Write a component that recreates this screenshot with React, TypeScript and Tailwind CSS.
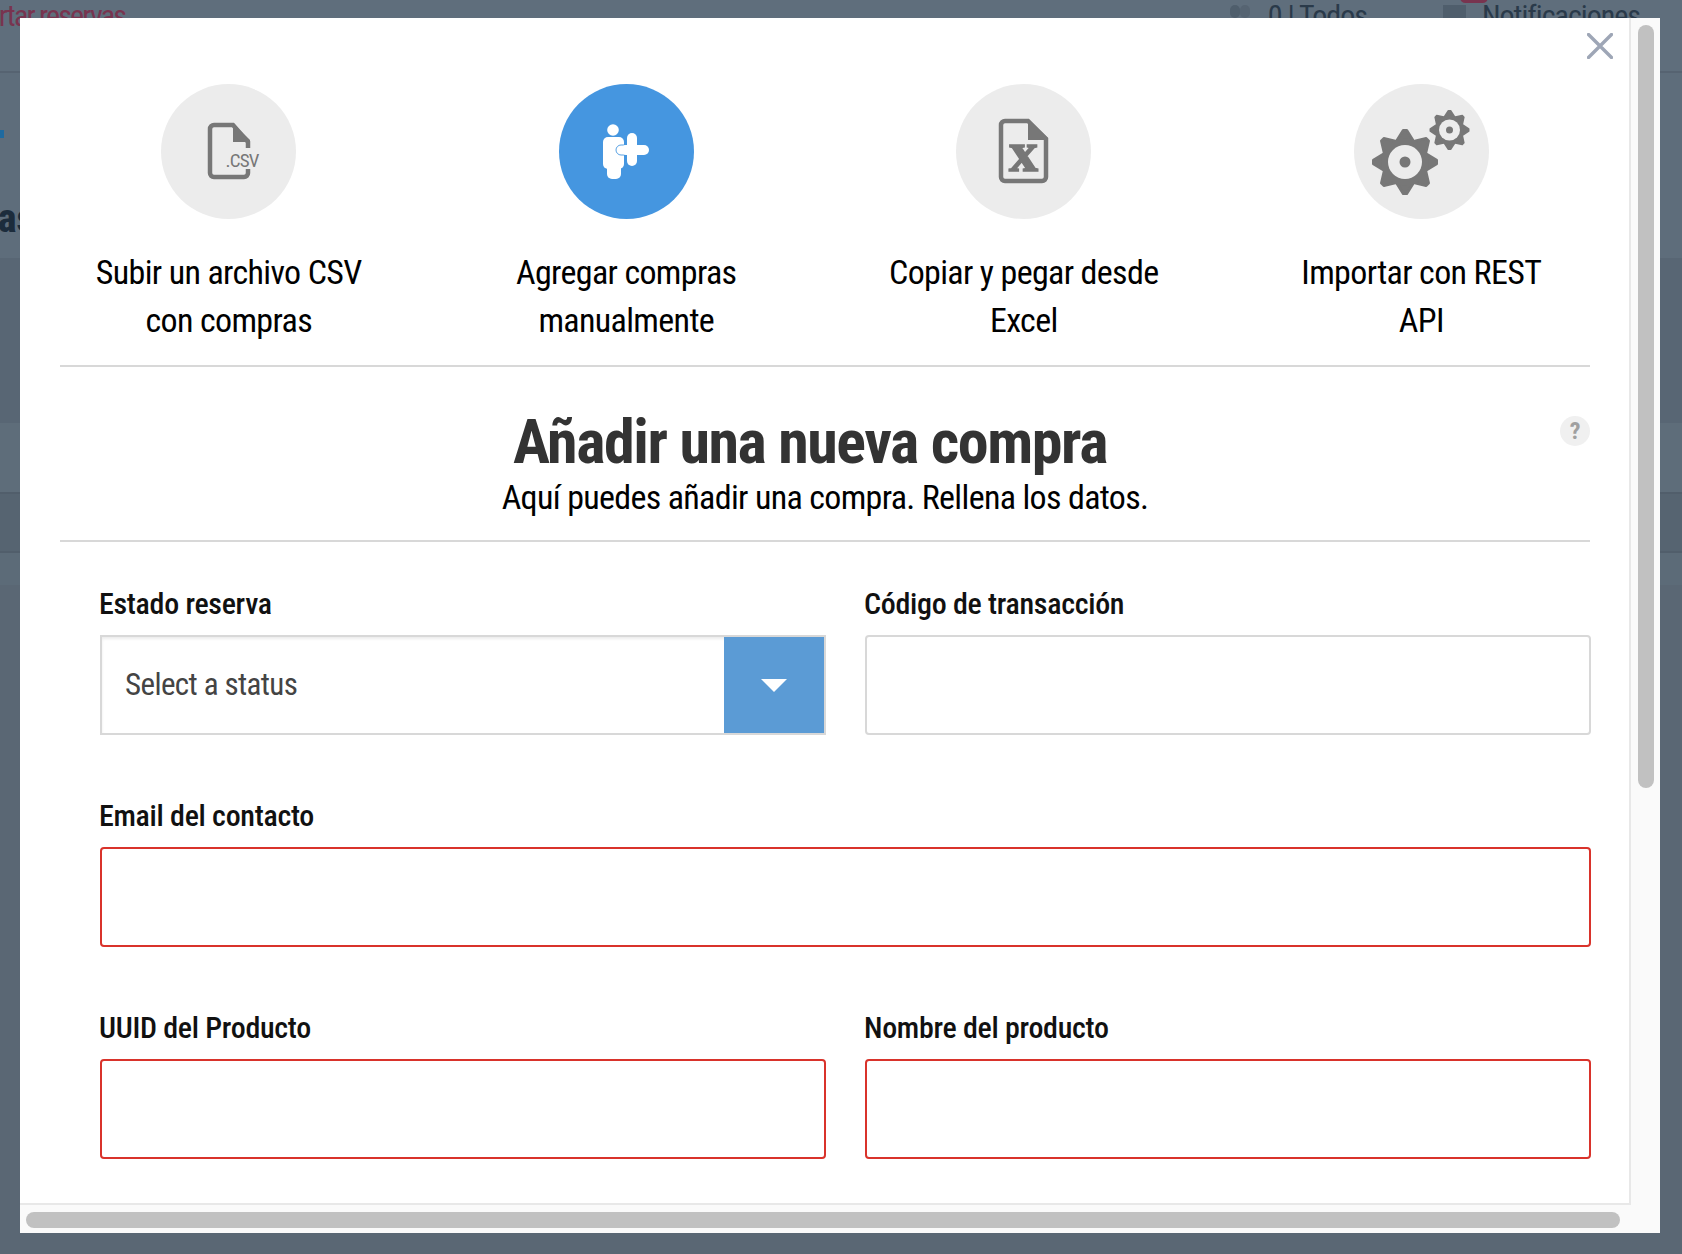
const OPTIONS = [
  { key: "csv", lines: ["Subir un archivo CSV", "con compras"] },
  { key: "manual", lines: ["Agregar compras", "manualmente"] },
  { key: "excel", lines: ["Copiar y pegar desde", "Excel"] },
  { key: "rest", lines: ["Importar con REST", "API"] },
];

const GRAY = "#777777";

function CsvIcon() {
  return (
    <svg viewBox="0 0 135 135" className="h-full w-full">
      <path d="M87 64V58L72 41H53a4 4 0 0 0-4 4V89a4 4 0 0 0 4 4H83a4 4 0 0 0 4-4V85" fill="none" stroke={GRAY} strokeWidth="4.5" />
      <path d="M72 39.5L89 56V58H72Z" fill={GRAY} />
      <text x="64.5" y="83" fontFamily="Roboto" fontSize="19" letterSpacing="-0.8" fill={GRAY} className="[font-stretch:75%]">.CSV</text>
    </svg>
  );
}

function ManualIcon() {
  return (
    <svg viewBox="0 0 135 135" className="h-full w-full" fill="#fff">
      <circle cx="54" cy="46" r="5.8" />
      <rect x="44" y="53" width="21" height="32" rx="5" />
      <rect x="48" y="60" width="14" height="35" rx="5" />
      <path d="M67 61H62a5 5 0 0 0 0 10H67" stroke="#4596e0" strokeWidth="0.9" />
      <rect x="68" y="49" width="10" height="33" rx="5" />
      <rect x="62" y="61" width="28" height="10" rx="5" />
    </svg>
  );
}

function ExcelIcon() {
  return (
    <svg viewBox="0 0 135 135" className="h-full w-full">
      <path d="M72 37H49a4 4 0 0 0-4 4V93a4 4 0 0 0 4 4H86a4 4 0 0 0 4-4V55Z" fill="none" stroke={GRAY} strokeWidth="4.5" />
      <path d="M72 35L92 54V56H72Z" fill={GRAY} />
      <text x="67.5" y="87" textAnchor="middle" fontFamily="Liberation Serif" fontWeight="700" fontSize="58" fill={GRAY} stroke={GRAY} strokeWidth="1.6">x</text>
    </svg>
  );
}

function Gear({ cx, cy, r, hole, inner, tooth }: { cx: number; cy: number; r: number; hole: number; inner: number; tooth: number }) {
  const angles = [0, 45, 90, 135, 180, 225, 270, 315];
  return (
    <g transform={`translate(${cx} ${cy})`}>
      {angles.map((a) => (
        <path
          key={a}
          transform={`rotate(${a})`}
          d={`M${-tooth} ${-r * 0.66}L${-tooth * 0.22} ${-r * 0.96}H${tooth * 0.22}L${tooth} ${-r * 0.66}Z`}
          fill={GRAY}
          stroke={GRAY}
          strokeWidth={r * 0.08}
          strokeLinejoin="round"
        />
      ))}
      <circle r={r * 0.72} fill={GRAY} />
      <circle r={inner} fill="#ececec" />
      <circle r={hole} fill={GRAY} />
    </g>
  );
}

function RestIcon() {
  return (
    <svg viewBox="0 0 135 135" className="h-full w-full">
      <Gear cx={51} cy={78} r={33} inner={17} hole={5.5} tooth={8} />
      <Gear cx={95.5} cy={46} r={20} inner={10.5} hole={3.5} tooth={5} />
    </svg>
  );
}

const ICONS: Record<string, () => React.ReactElement> = {
  csv: CsvIcon,
  manual: ManualIcon,
  excel: ExcelIcon,
  rest: RestIcon,
};

function Field({ label, invalid, className }: { label: string; invalid?: boolean; className?: string }) {
  return (
    <div className={className}>
      <div className="ml-[-1px] h-[44px] text-[30px] leading-[44px] font-[480] tracking-[-0.3px] text-[#111] [font-stretch:75%]">{label}</div>
      <div className={`mt-[9px] h-[100px] rounded-[4px] border-2 bg-white ${invalid ? "border-[#d9332b]" : "border-[#d8d8d8]"}`} />
    </div>
  );
}

function Backdrop() {
  return (
    <div className="flex h-[1254px] flex-col overflow-hidden bg-[#5a6774] text-[#2a3a4a] [font-stretch:75%]">
      <div className="flex h-[73px] shrink-0 border-b-2 border-[#566371] bg-[#5f6e7c]">
        <span className="mt-[1px] ml-[-54px] h-[30px] text-[30px] leading-[30px] tracking-[-1.8px] text-[#78344f]">Importar reservas</span>
        <div className="ml-auto flex h-[30px] items-start">
          <span className="mt-[5px] h-[13px] w-[10px] rounded-full bg-[#4f5e6c]" />
          <span className="mt-[5px] h-[13px] w-[10px] rounded-full bg-[#566472]" />
          <span className="mt-[1px] ml-[18px] text-[30px] leading-[30px] tracking-[-1px]">0 | Todos</span>
          <div className="relative ml-[76px] h-[18px] w-[23px]">
            <span className="absolute top-[5px] left-0 h-[13px] w-[23px] bg-[#4f5e6c]" />
            <span className="absolute top-[-8px] left-[17px] h-[11px] w-[28px] rounded-full bg-[#78344f]" />
          </div>
          <span className="mt-[1px] mr-[42px] ml-[16px] text-[30px] leading-[30px] tracking-[-1px]">Notificaciones</span>
        </div>
      </div>
      <div className="h-[185px] shrink-0 bg-[#5e6d7b]">
        <div className="mt-[57px] h-[8px] w-[4px] bg-[#1e6aa0]" />
        <div className="mt-[61px] ml-[-113px] text-[40px] leading-[40px] font-extrabold text-[#1c2c3c]">Reservas</div>
      </div>
      <div className="h-[165px] shrink-0 bg-[#586674]" />
      <div className="h-[69px] shrink-0 bg-[#5e6d7a]" />
      <div className="h-[61px] shrink-0 border-y-2 border-[#515e6b] bg-[#566471]" />
      <div className="h-[32px] shrink-0 bg-[#5c6b78]" />
    </div>
  );
}

export default function App() {
  return (
    <div className="relative h-[1254px] w-[1682px] overflow-hidden font-[Roboto]">
      <Backdrop />

      <div className="absolute top-[18px] left-[20px] flex h-[1215px] w-[1640px] flex-col bg-[#fafafa]">
        <div className="flex min-h-0 flex-1">
          <div className="relative h-[1187px] w-[1611px] overflow-hidden border-r-2 border-b-2 border-[#e8e8e8] bg-white pl-[10px]">
            <svg viewBox="0 0 26 26" className="absolute top-[15px] left-[1567px] h-[26px] w-[26px]" stroke="#9ea6b6" strokeWidth="3.4" strokeLinecap="round">
              <path d="M1.5 1.5L24.5 24.5M24.5 1.5L1.5 24.5" />
            </svg>

            <div className="grid w-[1590px] grid-cols-4 pt-[66px]">
              {OPTIONS.map((o) => {
                const Icon = ICONS[o.key];
                return (
                  <div key={o.key} className="flex flex-col items-center">
                    <div className={`h-[135px] w-[135px] rounded-full ${o.key === "manual" ? "bg-[#4596e0]" : "bg-[#ececec]"}`}>
                      <Icon />
                    </div>
                    <div className="mt-[29px] text-center text-[34px] leading-[48px] tracking-[-0.65px] text-black [font-stretch:75%]">
                      {o.lines.map((l) => (
                        <div key={l}>{l}</div>
                      ))}
                    </div>
                  </div>
                );
              })}
            </div>

            <div className="relative mx-[30px] mt-[21px] w-[1530px] border-t-2 border-b-2 border-[#d8d8d8] pt-[40px] pb-[24px] text-center">
              <h1 className="pr-[30px] text-[62px] leading-[70px] font-bold tracking-[-1.43px] text-[#333] [font-stretch:75%]">Añadir una nueva compra</h1>
              <p className="mt-[1px] text-[34px] leading-[38px] tracking-[-0.67px] text-black [font-stretch:75%]">Aquí puedes añadir una compra. Rellena los datos.</p>
              <span className="absolute top-[49px] right-0 flex h-[30px] w-[30px] items-center justify-center rounded-full bg-[#f0f0f0] text-[24px] font-bold text-[#a0a0a0] [font-stretch:75%]">?</span>
            </div>

            <div className="mx-[70px] mt-[40px] grid w-[1491px] grid-cols-2 gap-x-[39px] gap-y-[59px]">
              <div>
                <div className="ml-[-1px] h-[44px] text-[30px] leading-[44px] font-[480] tracking-[-0.3px] text-[#111] [font-stretch:75%]">Estado reserva</div>
                <div className="mt-[9px] flex h-[100px] overflow-hidden border-2 border-[#d8d8d8] bg-white shadow-[inset_0_2px_3px_rgba(0,0,0,0.08)]">
                  <span className="flex-1 pl-[23px] text-[31px] leading-[96px] tracking-[-0.6px] text-[#444] [font-stretch:75%]">Select a status</span>
                  <span className="flex w-[100px] items-center justify-center bg-[#5b9bd5]">
                    <svg viewBox="0 0 26 13" className="h-[13px] w-[26px]" fill="#fff"><path d="M0 0H26L13 13Z" /></svg>
                  </span>
                </div>
              </div>
              <Field label="Código de transacción" />
              <Field label="Email del contacto" invalid className="col-span-2" />
              <Field label="UUID del Producto" invalid />
              <Field label="Nombre del producto" invalid />
            </div>
          </div>

          <div className="flex-1 pt-[7px] pl-[7px]">
            <div className="h-[763px] w-[16px] rounded-full bg-[#c1c1c1]" />
          </div>
        </div>
        <div className="flex-none pb-[5px] pl-[6px]">
          <div className="h-[16px] w-[1594px] rounded-full bg-[#c1c1c1]" />
        </div>
      </div>
    </div>
  );
}
